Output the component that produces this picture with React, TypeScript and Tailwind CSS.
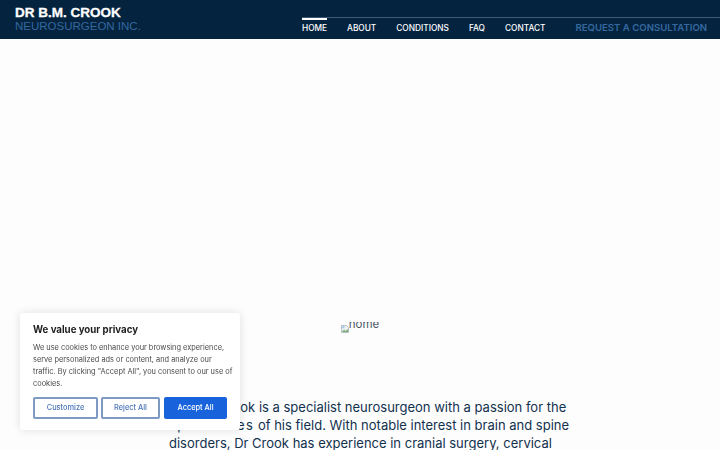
const NAV_LINKS = ["ABOUT", "CONDITIONS", "FAQ", "CONTACT"];

function BrokenImage() {
  return (
    <svg width="8" height="8" viewBox="0 0 8 8" className="shrink-0 mt-[3px]">
      <path d="M0.5 0.5H5.5L7.5 2.5V7.5H0.5Z" fill="#eef1f4" stroke="#a8b0b8" strokeWidth="0.8" />
      <path d="M1 7L3 4.5L4.5 6L7 4V7Z" fill="#7fae78" />
      <rect x="1.2" y="1.2" width="2.2" height="2" fill="#a5c4ea" />
    </svg>
  );
}

function Header() {
  return (
    <header className="h-[39px] bg-[#03233f] flex justify-between overflow-hidden">
      <div className="pl-[15px] pt-[6px] font-['Liberation_Sans',sans-serif]">
        <p className="text-[13.5px] leading-[13px] font-bold text-white [-webkit-text-stroke:0.3px_white]">DR B.M. CROOK</p>
        <p className="mt-px text-[11.5px] leading-[13px] text-[#35689f]">NEUROSURGEON INC.</p>
      </div>
      <nav className="w-[418px] mt-[17px] border-t border-[#3c5a75] flex items-start font-['Inter',sans-serif] text-[8.3px] font-medium text-white">
        <a className="w-[25px] border-t-[2px] border-white pt-[1px] leading-[14px] text-center">HOME</a>
        <div className="flex gap-[20px] ml-[20px] pt-[3px] leading-[14px]">
          {NAV_LINKS.map((link) => (
            <a key={link}>{link}</a>
          ))}
        </div>
        <a className="ml-[30px] pt-[3px] leading-[14px] text-[9.6px] font-semibold text-[#35689f]">REQUEST A CONSULTATION</a>
      </nav>
    </header>
  );
}

function CookieBanner() {
  return (
    <div className="fixed left-[20px] bottom-[20px] w-[220px] h-[117px] bg-white rounded-[3px] shadow-[0_0_10px_rgba(0,0,0,0.12)] px-[13px] pt-[10px] font-['Inter',sans-serif]">
      <p className="text-[9.7px] leading-[13px] font-bold text-[#212121]">We value your privacy</p>
      <p className="mt-[6px] -mr-[7px] text-[7.4px] leading-[12px] text-[#4a4a4a]">
        We use cookies to enhance your browsing experience, serve personalized ads or content, and analyze our traffic. By clicking "Accept All", you consent to our use of cookies.
      </p>
      <div className="mt-[7px] flex gap-[3px] text-[7.4px] font-medium">
        <button className="w-[65px] h-[22px] border-2 border-[#7c9ac4] rounded-[2px] text-[#4a74b8]">Customize</button>
        <button className="w-[59px] h-[22px] border-2 border-[#7c9ac4] rounded-[2px] text-[#4a74b8]">Reject All</button>
        <button className="w-[63px] h-[22px] ml-px bg-[#1863dc] rounded-[2px] text-white">Accept All</button>
      </div>
    </div>
  );
}

export default function App() {
  return (
    <div className="h-[450px] overflow-hidden bg-[#fdfdfe] relative font-['Inter',sans-serif]">
      <Header />
      <main>
        <div className="h-[283px]" />
        <div className="h-[76px]">
          <div className="flex justify-center h-[11px] overflow-hidden">
            <BrokenImage />
            <span className="text-[11.5px] leading-[4px] text-[#4b5563]">home</span>
          </div>
        </div>
        <p className="ml-[169px] w-[402px] text-[13px] leading-[18px] text-[#12314d]">
          Dr B.M. Crook is a specialist neurosurgeon with a passion for the <span className="tracking-[1.4px]">specialities</span> of his field. With notable interest in brain and spine disorders, Dr Crook has experience in cranial surgery, cervical
        </p>
      </main>
      <CookieBanner />
    </div>
  );
}
